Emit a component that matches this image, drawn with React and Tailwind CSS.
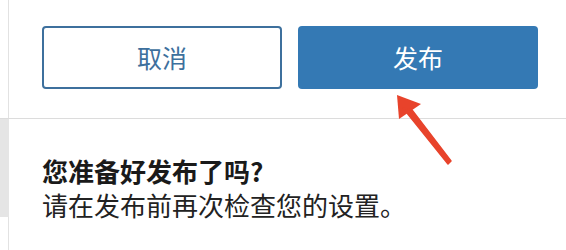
import React from "react";

export default function App() {
  return (
    <div className="relative w-[566px] h-[250px] bg-white overflow-hidden font-['Noto_Sans_CJK_SC','Noto_Sans',sans-serif]">
      <div className="flex h-[119px] border-b border-[#dcdcdc]">
        <div className="w-[8px]" />
        <div className="flex flex-1 items-start gap-[16px] border-l border-[#e2e2e2] pl-[33px] pt-[26px]">
          <button className="flex h-[63px] w-[240px] items-center justify-center rounded-[4px] border-2 border-[#3d709d] bg-white text-[25px] text-[#3d709d]">
            取消
          </button>
          <button className="flex h-[63px] w-[240px] items-center justify-center rounded-[4px] bg-[#3479b4] text-[25px] text-white">
            发布
          </button>
        </div>
      </div>
      <div className="flex h-[131px]">
        <div className="flex w-[9px] flex-col">
          <div className="h-[98px] bg-[#e5e5e5]" />
          <div className="flex-1 border-r border-[#e2e2e2]" />
        </div>
        <div className="flex-1 pl-[33px] pt-[35px] text-[26px] leading-[34px]">
          <div className="font-bold text-[#1a1a1a]">您准备好发布了吗?</div>
          <div className="text-[#222222]">请在发布前再次检查您的设置。</div>
        </div>
      </div>
      <svg className="pointer-events-none absolute left-0 top-0" width="566" height="250" viewBox="0 0 566 250">
        <polygon points="397,95 399,119 421,104" fill="#e8432b" />
        <polygon points="403,108 412,110 451,161 448,164" fill="#e8432b" strokeLinejoin="round" stroke="#e8432b" strokeWidth="1.5" />
      </svg>
    </div>
  );
}
